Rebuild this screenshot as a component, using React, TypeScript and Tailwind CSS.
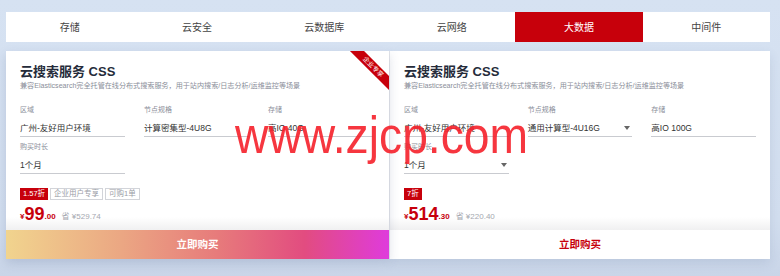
import React from 'react';

const tabs = ['存储', '云安全', '云数据库', '云网络', '大数据', '中间件'];

interface Field {
  label: string;
  value: string;
  select?: boolean;
}

interface CardProps {
  fields: Field[];
  duration: Field;
  tags: { text: string; red?: boolean }[];
  price: string;
  cents: string;
  save: string;
  featured?: boolean;
}

function Arrow() {
  return (
    <svg width="6" height="4" viewBox="0 0 6 4" className="block">
      <path d="M0 0h6L3 4z" fill="#666" />
    </svg>
  );
}

function FieldBox({ field }: { field: Field }) {
  return (
    <div className="w-[105px]">
      <div className="h-[8px] text-[7px] leading-[8px] text-[#8a8e99]">{field.label}</div>
      <div className="mt-[8px] flex h-[15px] items-start justify-between border-b border-[#c9cbd0] pb-[2px]">
        <span className="text-[8.5px] leading-[12px] text-[#333]">{field.value}</span>
        {field.select && (
          <span className="mr-[2px] mt-[4px]">
            <Arrow />
          </span>
        )}
      </div>
    </div>
  );
}

function ProductCard({ fields, duration, tags, price, cents, save, featured }: CardProps) {
  return (
    <div
      className={`relative flex h-[208px] flex-col bg-white ${
        featured ? 'z-10 w-[383px] shadow-[0_4px_10px_rgba(60,80,120,0.18)]' : 'w-[381px] border-l border-[#e3e5ea] shadow-[0_4px_10px_rgba(60,80,120,0.12)]'
      }`}
    >
      {featured && (
        <div className="absolute right-0 top-0 h-[42px] w-[42px] overflow-hidden">
          <div className="absolute left-[-4px] top-[11px] flex h-[10px] w-[60px] rotate-45 items-center justify-center bg-[#c7000b] text-[6.5px] leading-none text-white">
            企业专享
          </div>
        </div>
      )}
      <div className="flex-1 bg-[linear-gradient(to_bottom,#ffffff_calc(100%-13px),#f0f0f1)] px-[14px] pt-[13px]">
        <div className="h-[16px] text-[13px] font-bold leading-[16px] text-[#252b3a]">云搜索服务 CSS</div>
        <div className="mt-[1px] h-[10px] whitespace-nowrap text-[7.1px] leading-[10px] text-[#8a8e99]">
          兼容Elasticsearch完全托管在线分布式搜索服务，用于站内搜索/日志分析/运维监控等场景
        </div>
        <div className="mt-[15px] flex gap-[19px]">
          {fields.map((f) => (
            <FieldBox key={f.label} field={f} />
          ))}
        </div>
        <div className="mt-[6px]">
          <FieldBox field={duration} />
        </div>
        <div className="mt-[14px] flex h-[12px] gap-[2px]">
          {tags.map((t) =>
            t.red ? (
              <span
                key={t.text}
                className="flex items-center bg-[#c7000b] px-[3px] text-[7.5px] leading-none text-white"
              >
                {t.text}
              </span>
            ) : (
              <span
                key={t.text}
                className="flex items-center border border-[#d2d4d9] px-[3px] text-[7.5px] leading-none text-[#9a9da6]"
              >
                {t.text}
              </span>
            )
          )}
        </div>
        <div className="mt-[5px] flex h-[18px] items-end">
          <span className="mb-[2px] text-[8px] font-bold leading-none text-[#c7000b]">¥</span>
          <span className="text-[18px] font-bold leading-[18px] text-[#c7000b]">{price}</span>
          <span className="mb-[2px] text-[8px] font-bold leading-none text-[#c7000b]">{cents}</span>
          <span className="mb-[2px] ml-[6px] text-[8px] leading-none text-[#a5a8b0]">省 {save}</span>
        </div>
      </div>
      {featured ? (
        <div className="flex h-[29px] items-center justify-center bg-[linear-gradient(90deg,#f1d48e_0%,#eba783_30%,#e77b7b_55%,#e24c80_78%,#df3bdc_100%)] text-[10.5px] font-bold text-white">
          立即购买
        </div>
      ) : (
        <div className="flex h-[29px] items-center justify-center bg-white text-[10.5px] font-bold text-[#c7000b]">
          立即购买
        </div>
      )}
    </div>
  );
}

export default function App() {
  return (
    <div
      className="relative h-[276px] w-[780px] overflow-hidden bg-[linear-gradient(to_bottom,#d6e2f2,#d2deef_80%,#c9d5e8)] pl-[6px] pt-[12px]"
      style={{ fontFamily: '"Liberation Sans", "Noto Sans CJK SC", sans-serif' }}
    >
      {/* Tabs */}
      <div className="grid h-[30px] w-[764px] grid-cols-6 bg-white">
        {tabs.map((t) => (
          <div
            key={t}
            className={`flex items-center justify-center text-[10px] ${
              t === '大数据' ? 'bg-[#c7000b] text-white' : 'text-[#444]'
            }`}
          >
            {t}
          </div>
        ))}
      </div>

      {/* Cards */}
      <div className="mt-[9px] flex">
        <ProductCard
          featured
          fields={[
            { label: '区域', value: '广州-友好用户环境' },
            { label: '节点规格', value: '计算密集型-4U8G' },
            { label: '存储', value: '高IO 40G' },
          ]}
          duration={{ label: '购买时长', value: '1个月' }}
          tags={[{ text: '1.57折', red: true }, { text: '企业用户专享' }, { text: '可购1单' }]}
          price="99"
          cents=".00"
          save="¥529.74"
        />
        <ProductCard
          fields={[
            { label: '区域', value: '广州-友好用户环境' },
            { label: '节点规格', value: '通用计算型-4U16G', select: true },
            { label: '存储', value: '高IO 100G' },
          ]}
          duration={{ label: '购买时长', value: '1个月', select: true }}
          tags={[{ text: '7折', red: true }]}
          price="514"
          cents=".30"
          save="¥220.40"
        />
      </div>

      {/* Watermark */}
      <div className="pointer-events-none absolute left-[235px] top-[109px] z-20 origin-left scale-x-[0.89] whitespace-nowrap text-[52px] leading-none text-[#f5202a]/90">
        www.zjcp.com
      </div>
    </div>
  );
}
